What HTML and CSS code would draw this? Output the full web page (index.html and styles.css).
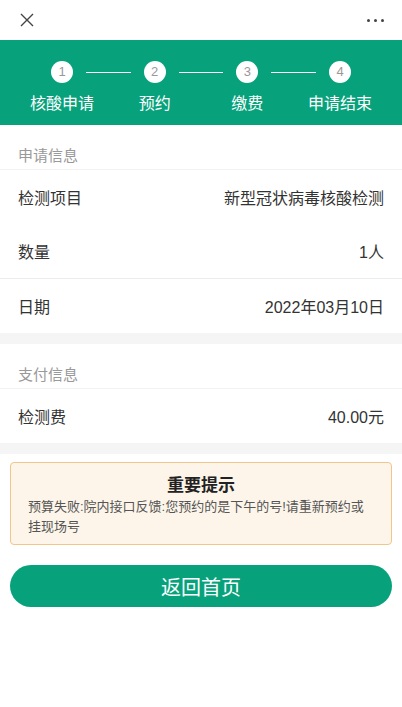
FILE: index.html
```html
<!DOCTYPE html>
<html lang="zh-CN">
<head>
    <meta charset="UTF-8">
    <meta name="viewport" content="width=device-width, initial-scale=1.0">
    <title>核酸申请</title>
    <link rel="stylesheet" href="styles.css">
</head>
<body>
    <header class="topbar">
        <svg class="closeIcon" width="14" height="14" viewBox="0 0 14 14">
            <path d="M1 1L13 13M13 1L1 13" stroke="#444" stroke-width="1.4" fill="none"/>
        </svg>
        <div class="moreIcon"><span></span><span></span><span></span></div>
    </header>

    <section class="steps">
        <div class="step">
            <div class="stepNum">1</div>
            <div class="stepName">核酸申请</div>
        </div>
        <div class="stepLine"></div>
        <div class="step">
            <div class="stepNum">2</div>
            <div class="stepName">预约</div>
        </div>
        <div class="stepLine"></div>
        <div class="step">
            <div class="stepNum">3</div>
            <div class="stepName">缴费</div>
        </div>
        <div class="stepLine"></div>
        <div class="step">
            <div class="stepNum">4</div>
            <div class="stepName">申请结束</div>
        </div>
    </section>

    <section class="panel">
        <div class="panelTitle">申请信息</div>
        <div class="row">
            <span>检测项目</span>
            <span>新型冠状病毒核酸检测</span>
        </div>
        <div class="row">
            <span>数量</span>
            <span>1人</span>
        </div>
        <div class="row lined">
            <span>日期</span>
            <span>2022年03月10日</span>
        </div>
    </section>

    <section class="panel">
        <div class="panelTitle">支付信息</div>
        <div class="row">
            <span>检测费</span>
            <span>40.00元</span>
        </div>
    </section>

    <div class="notice">
        <h3>重要提示</h3>
        <p>预算失败:院内接口反馈:您预约的是下午的号!请重新预约或挂现场号</p>
    </div>

    <button class="homeBtn">返回首页</button>
</body>
</html>
```

FILE: styles.css
```css
/* page */
body {
    margin: 0;
    padding: 0;
    background-color: #fff;
    font-family: "Liberation Sans", "Noto Sans CJK SC", sans-serif;
    color: #222;
}

/* top bar */
.topbar {
    height: 40px;
    display: flex;
    align-items: center;
    justify-content: space-between;
    padding: 0 18px 0 20px;
}

.moreIcon {
    display: flex;
    gap: 4px;
}

.moreIcon span {
    width: 3px;
    height: 3px;
    border-radius: 50%;
    background-color: #444;
}

/* steps */
.steps {
    background-color: #07a27b;
    height: 85px;
    display: flex;
    align-items: flex-start;
    padding: 21px 22px 0;
    box-sizing: border-box;
}

.step {
    width: 80px;
    display: flex;
    flex-direction: column;
    align-items: center;
}

.stepNum {
    width: 22px;
    height: 22px;
    border-radius: 50%;
    background-color: #fff;
    color: #999;
    font-size: 13px;
    line-height: 22px;
    text-align: center;
}

.stepName {
    color: #fff;
    font-size: 16px;
    margin-top: 7px;
    white-space: nowrap;
}

.stepLine {
    flex: 1;
    height: 1px;
    background-color: #fff;
    margin: 11px -16px 0;
}

/* info panels */
.panel {
    border-bottom: 11px solid #f5f5f5;
}

.panelTitle {
    height: 45px;
    box-sizing: border-box;
    padding: 19px 18px 0;
    font-size: 15px;
    color: #999;
    border-bottom: 1px solid #f2f2f2;
}

.row {
    height: 54px;
    display: flex;
    align-items: center;
    justify-content: space-between;
    padding: 0 18px;
    font-size: 16px;
    color: #333;
}

.row.lined {
    border-top: 1px solid #ececec;
}

/* notice box */
.notice {
    margin: 8px 10px 0;
    border: 1px solid #f1c68a;
    border-radius: 4px;
    background-color: #fdf5ea;
    padding: 12px 17px 7px;
}

.notice h3 {
    margin: 0;
    text-align: center;
    font-size: 17px;
    line-height: 22px;
    color: #222;
}

.notice p {
    margin: 0;
    font-size: 13px;
    line-height: 20px;
    color: #555;
}

.homeBtn {
    display: block;
    width: 382px;
    height: 42px;
    margin: 20px auto 0;
    border: none;
    border-radius: 21px;
    background-color: #07a27b;
    color: #fff;
    font-family: inherit;
    font-size: 20px;
}
```
